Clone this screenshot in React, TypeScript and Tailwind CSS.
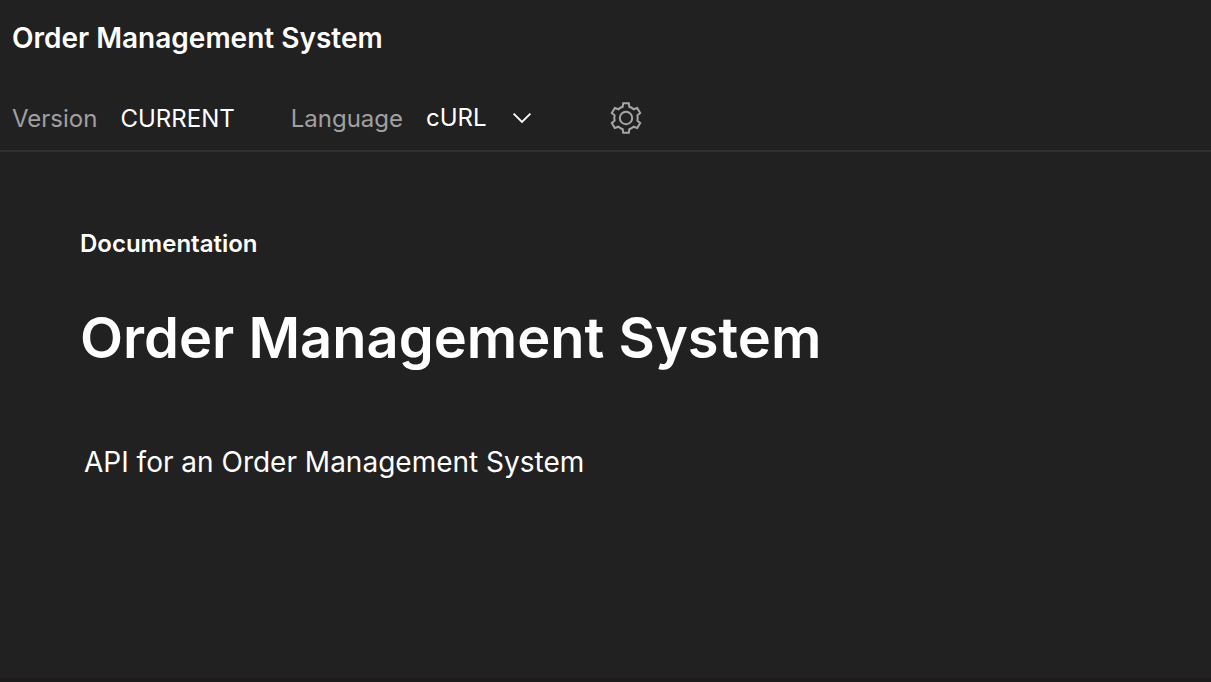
function ChevronIcon() {
  return (
    <svg
      viewBox="0 0 24 24"
      className="pointer-events-none col-start-1 row-start-1 size-6 justify-self-end"
      fill="none"
      stroke="currentColor"
      strokeWidth="1.8"
      aria-hidden="true"
    >
      <path d="M3.6 7.6l8.4 8.4 8.4-8.4" />
    </svg>
  );
}

function GearIcon() {
  return (
    <svg viewBox="0 0 32 32" className="size-8" fill="none" stroke="currentColor" strokeWidth="2" aria-hidden="true">
      <path d="M13.2 1.2H18.8L19.3 4.8Q21.8 5.6 23.6 7.3L27.2 6L30.2 11L27.4 13.3Q28 16 27.4 18.7L30.2 21L27.2 26L23.6 24.7Q21.8 26.4 19.3 27.2L18.8 30.8H13.2L12.7 27.2Q10.2 26.4 8.4 24.7L4.8 26L1.8 21L4.6 18.7Q4 16 4.6 13.3L1.8 11L4.8 6L8.4 7.3Q10.2 5.6 12.7 4.8Z" />
      <circle cx="16" cy="16" r="6.2" />
    </svg>
  );
}

export default function App() {
  return (
    <div className="flex min-h-screen flex-col border-b-4 border-[#1d1b1c] bg-[#212121] font-['Inter',sans-serif] text-white">
      <header className="border-b-2 border-[#303030] px-3">
        <p className="pt-5 text-[28px] leading-9 font-semibold">Order Management System</p>
        <div className="mt-[30px] flex h-16 items-center text-2xl">
          <span className="mr-[23px] pt-0.5 text-[#a0a0a0]">Version</span>
          <span className="mr-14 pt-0.5">CURRENT</span>
          <label htmlFor="language" className="mr-[23px] pt-0.5 text-[#a0a0a0]">
            Language
          </label>
          <div className="grid items-center">
            <select
              id="language"
              className="col-start-1 row-start-1 w-27 appearance-none bg-transparent outline-none"
            >
              <option>cURL</option>
            </select>
            <ChevronIcon />
          </div>
          <button type="button" aria-label="Settings" className="ml-19 text-[#a6a6a6]">
            <GearIcon />
          </button>
        </div>
      </header>
      <main className="px-20 pt-[74px]">
        <p className="text-2xl leading-9 font-semibold">Documentation</p>
        <h1 className="mt-10 text-[56px] leading-[72px] font-semibold">Order Management System</h1>
        <p className="mt-17 px-1 text-[28px] leading-10">API for an Order Management System</p>
      </main>
    </div>
  );
}
